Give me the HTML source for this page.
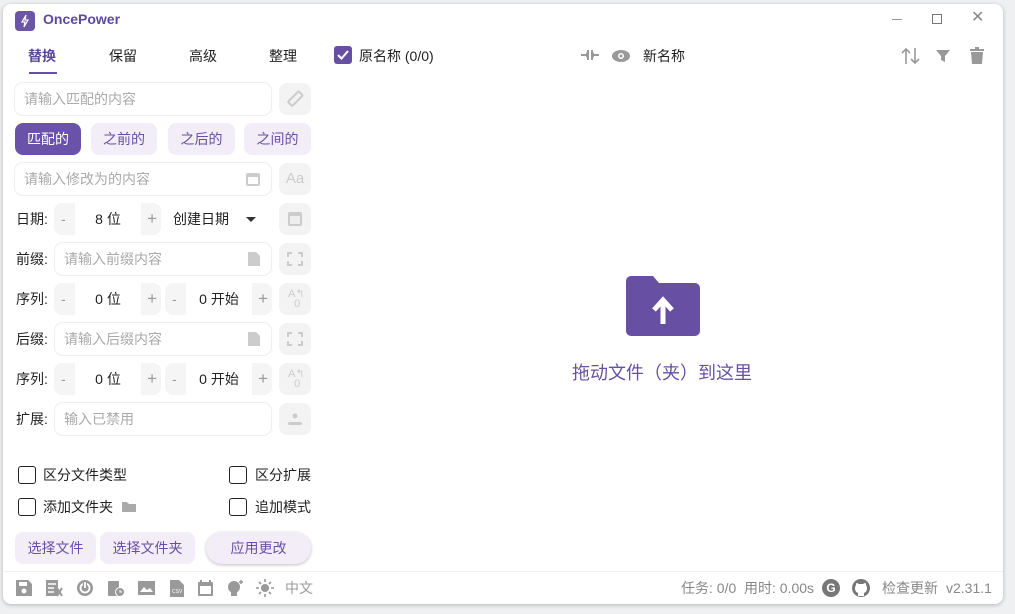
<!DOCTYPE html>
<html><head><meta charset="utf-8"><style>
*{box-sizing:border-box;margin:0;padding:0}
body{width:1015px;height:614px;background:#eef0f2;font-family:"Liberation Sans","Noto Sans CJK SC",sans-serif;font-size:14px;color:#222;position:relative;overflow:hidden}
.win{position:absolute;left:3px;top:4px;width:1000px;height:600px;background:#fff;border-radius:8px;box-shadow:0 1px 4px rgba(0,0,0,.25)}
.a{position:absolute}
.inp{position:absolute;height:32px;border-radius:8px;background:#fff;box-shadow:0 0 0 1px #eeeeee;color:#aaa;font-size:14px;line-height:32px;padding-left:9px}
.ib{position:absolute;width:32px;height:32px;border-radius:8px;background:#f3f3f3}
.pb{position:absolute;height:32px;border-radius:8px;background:#f3edf7;color:#6750a4;text-align:center;line-height:32px;font-size:14px}
.lbl{position:absolute;left:13px;font-size:14px;line-height:32px}
.st{position:absolute;height:32px;border-radius:8px;background:#f5f5f5;font-size:14px;line-height:32px}
.st .c{position:absolute;left:21px;width:66px;top:0;height:32px;background:#fff;text-align:center;color:#222}
.st .m{position:absolute;left:7px;color:#999}
.st .p{position:absolute;right:4px;color:#999;font-size:17px}
.cb{position:absolute;width:18px;height:18px;border:1.5px solid #222;border-radius:3px}
.t{position:absolute;font-size:14px;line-height:20px}
.bi{position:absolute;top:575px}
</style></head><body>
<div class="win">
<div class="a" style="left:12px;top:7px;width:20px;height:20px;border-radius:4px;background:#6a55a8"><svg width="20" height="20"><path d="M11 4 L7 11 H10 L9 16 L13 9 H10 Z" fill="none" stroke="#fff" stroke-width="1.2"/></svg></div>
<div class="t" style="left:40px;top:5px;font-weight:bold;color:#5b4a9e;font-size:14px">OncePower</div>
<div class="a" style="left:889px;top:15px;width:10px;border-top:1px solid #999"></div>
<div class="a" style="left:929px;top:10px;width:10px;height:10px;border:1px solid #777"></div>
<div class="t" style="left:968px;top:4px;color:#888;font-size:16px">✕</div>
<div class="t" style="left:25px;top:42px;color:#5b4a9e;font-weight:bold">替换</div>
<div class="t" style="left:106px;top:42px">保留</div>
<div class="t" style="left:186px;top:42px">高级</div>
<div class="t" style="left:266px;top:42px">整理</div>
<div class="a" style="left:26px;top:68px;width:28px;height:2px;background:#6750a4"></div>

<div class="inp" style="left:12px;top:79px;width:256px">请输入匹配的内容</div>
<div class="ib" style="left:276px;top:79px"><svg width="32" height="32"><rect x="9" y="13" width="15" height="6" rx="1" transform="rotate(-45 16 16)" fill="none" stroke="#ccc" stroke-width="2"/></svg></div>
<div class="pb" style="left:12px;top:119px;width:66px;background:#6a52a8;color:#fff">匹配的</div>
<div class="pb" style="left:88px;top:119px;width:66px">之前的</div>
<div class="pb" style="left:165px;top:119px;width:67px">之后的</div>
<div class="pb" style="left:241px;top:119px;width:67px">之间的</div>
<div class="inp" style="left:12px;top:159px;width:256px">请输入修改为的内容<svg class="a" style="left:230px;top:8px" width="16" height="16"><rect x="1" y="2" width="14" height="13" rx="2" fill="#ccc"/><rect x="3" y="6" width="10" height="7" fill="#fff"/></svg></div>
<div class="ib" style="left:276px;top:159px;color:#ccc;text-align:center;line-height:32px;font-size:15px">Aa</div>

<div class="lbl" style="top:199px">日期:</div>
<div class="st" style="left:51px;top:199px;width:107px"><span class="m">-</span><div class="c">8 位</div><span class="p">+</span></div>
<div class="t" style="left:170px;top:205px">创建日期</div>
<div class="a" style="left:243px;top:213px;border-left:5px solid transparent;border-right:5px solid transparent;border-top:5px solid #333"></div>
<div class="ib" style="left:276px;top:199px"><svg width="32" height="32"><rect x="9" y="9" width="14" height="14" rx="2" fill="#ccc"/><rect x="11" y="13" width="10" height="8" fill="#eee"/></svg></div>

<div class="lbl" style="top:239px">前缀:</div>
<div class="inp" style="left:52px;top:239px;width:216px">请输入前缀内容<svg class="a" style="left:192px;top:8px" width="14" height="16"><path d="M1 1h8l4 4v10H1z" fill="#ccc"/></svg></div>
<div class="ib" style="left:276px;top:239px"><svg width="32" height="32"><path d="M9 14V10h4M19 10h4v4M23 18v4h-4M13 22H9v-4" fill="none" stroke="#ccc" stroke-width="2"/></svg></div>

<div class="lbl" style="top:279px">序列:</div>
<div class="st" style="left:51px;top:279px;width:107px"><span class="m">-</span><div class="c">0 位</div><span class="p">+</span></div>
<div class="st" style="left:162px;top:279px;width:107px"><span class="m">-</span><div class="c">0 开始</div><span class="p">+</span></div>
<div class="ib" style="left:276px;top:279px;color:#ccc;font-size:11px;padding:6px 0 0 9px;line-height:10px">A↰<br>&nbsp;&nbsp;0</div>

<div class="lbl" style="top:319px">后缀:</div>
<div class="inp" style="left:52px;top:319px;width:216px">请输入后缀内容<svg class="a" style="left:192px;top:8px" width="14" height="16"><path d="M1 1h8l4 4v10H1z" fill="#ccc"/></svg></div>
<div class="ib" style="left:276px;top:319px"><svg width="32" height="32"><path d="M9 14V10h4M19 10h4v4M23 18v4h-4M13 22H9v-4" fill="none" stroke="#ccc" stroke-width="2"/></svg></div>

<div class="lbl" style="top:359px">序列:</div>
<div class="st" style="left:51px;top:359px;width:107px"><span class="m">-</span><div class="c">0 位</div><span class="p">+</span></div>
<div class="st" style="left:162px;top:359px;width:107px"><span class="m">-</span><div class="c">0 开始</div><span class="p">+</span></div>
<div class="ib" style="left:276px;top:359px;color:#ccc;font-size:11px;padding:6px 0 0 9px;line-height:10px">A↰<br>&nbsp;&nbsp;0</div>

<div class="lbl" style="top:399px">扩展:</div>
<div class="inp" style="left:52px;top:399px;width:216px">输入已禁用</div>
<div class="ib" style="left:276px;top:399px"><svg width="32" height="32"><circle cx="16" cy="13" r="2.5" fill="#ccc"/><rect x="9" y="19" width="14" height="3" rx="1.5" fill="#ccc"/></svg></div>

<div class="cb" style="left:15px;top:462px"></div><div class="t" style="left:40px;top:461px">区分文件类型</div>
<div class="cb" style="left:226px;top:462px"></div><div class="t" style="left:252px;top:461px">区分扩展</div>
<div class="cb" style="left:15px;top:494px"></div><div class="t" style="left:40px;top:493px">添加文件夹</div>
<svg class="a" style="left:118px;top:496px" width="16" height="13"><path d="M1 2h5l2 2h7v8H1z" fill="#aaa"/></svg>
<div class="cb" style="left:226px;top:494px"></div><div class="t" style="left:252px;top:493px">追加模式</div>

<div class="pb" style="left:12px;top:528px;width:81px">选择文件</div>
<div class="pb" style="left:97px;top:528px;width:95px">选择文件夹</div>
<div class="pb" style="left:203px;top:528px;width:105px;border-radius:16px;box-shadow:0 1px 3px rgba(0,0,0,.25)">应用更改</div>

<div class="a" style="left:0;top:567px;width:1000px;border-top:1px solid #f0f0f0"></div>
<svg class="bi" style="left:12px" width="18" height="18"><path d="M1 1h12l4 4v12H1z" fill="#999"/><rect x="4" y="3" width="8" height="4" fill="#fff"/><circle cx="9" cy="12" r="2.5" fill="#fff"/></svg>
<svg class="bi" style="left:42px" width="18" height="18"><rect x="1" y="1" width="12" height="16" fill="#999"/><path d="M3 5h8M3 9h6M3 13h6" stroke="#fff" stroke-width="1.5"/><path d="M12 9l5 8M17 9l-5 8" stroke="#999" stroke-width="2"/></svg>
<svg class="bi" style="left:73px" width="18" height="18"><circle cx="9" cy="9" r="8" fill="#999"/><circle cx="9" cy="9" r="4.5" fill="none" stroke="#fff" stroke-width="1.8"/><path d="M9 3v6" stroke="#999" stroke-width="4"/><path d="M9 3v6" stroke="#fff" stroke-width="1.8"/></svg>
<svg class="bi" style="left:104px" width="18" height="18"><rect x="1" y="2" width="11" height="15" rx="1" fill="#999"/><circle cx="13" cy="13" r="4.5" fill="#999" stroke="#fff"/><path d="M13 11v2h2" stroke="#fff" fill="none"/></svg>
<svg class="bi" style="left:134px" width="19" height="18"><rect x="1" y="2" width="17" height="14" fill="#999"/><path d="M3 13l4-5 3 3 3-2 3 4z" fill="#fff"/></svg>
<svg class="bi" style="left:166px" width="16" height="18"><path d="M1 1h9l5 5v12H1z" fill="#999"/><text x="3" y="14" font-size="5" fill="#fff" font-family="Liberation Sans">CSV</text></svg>
<svg class="bi" style="left:194px" width="17" height="18"><rect x="1" y="3" width="15" height="14" rx="1" fill="#999"/><rect x="3" y="7" width="11" height="8" fill="#fff"/><path d="M4 1v3M13 1v3" stroke="#999" stroke-width="2"/></svg>
<svg class="bi" style="left:223px" width="19" height="18"><circle cx="8" cy="8" r="6" fill="#999"/><rect x="5" y="13" width="6" height="4" fill="#999"/><path d="M15 1v4M13 3h4" stroke="#999" stroke-width="1.5"/></svg>
<svg class="bi" style="left:253px" width="18" height="18"><circle cx="9" cy="9" r="4" fill="#999"/><path d="M9 0v3M9 15v3M0 9h3M15 9h3M3 3l2 2M13 13l2 2M3 15l2-2M13 5l2-2" stroke="#999" stroke-width="1.6"/></svg>
<div class="t" style="left:282px;top:574px;color:#999">中文</div>

<div class="t" style="left:678px;top:574px;color:#888">任务: 0/0 &nbsp;用时: 0.00s</div>
<div class="a" style="left:819px;top:575px;width:18px;height:18px;border-radius:50%;background:#777;color:#fff;font-size:12px;font-weight:bold;text-align:center;line-height:18px">G</div>
<svg class="a" style="left:849px;top:575px" width="18" height="18"><circle cx="9" cy="9" r="9" fill="#777"/><path d="M6 17v-3c-2-1-3-2-3-5 0-1 1-3 1-3 0-1 0-2 1-2l2 1h4l2-1c1 0 1 1 1 2 0 0 1 2 1 3 0 3-1 4-3 5v3z" fill="#fff"/></svg>
<div class="t" style="left:879px;top:574px;color:#888">检查更新</div>
<div class="t" style="left:943px;top:574px;color:#888">v2.31.1</div>

<div class="a" style="left:331px;top:42px;width:18px;height:18px;border-radius:3px;background:#6750a4"><svg width="18" height="18"><path d="M4 9l3.5 3.5L14 5" fill="none" stroke="#fff" stroke-width="2"/></svg></div>
<div class="t" style="left:356px;top:42px">原名称 (0/0)</div>
<svg class="a" style="left:577px;top:44px" width="20" height="14"><path d="M1 7h5M14 7h5M8 2v10M12 2v10" stroke="#999" stroke-width="2"/><path d="M6 4l2 3-2 3zM14 4l-2 3 2 3z" fill="#999"/></svg>
<svg class="a" style="left:608px;top:45px" width="20" height="14"><ellipse cx="10" cy="7" rx="9" ry="6" fill="#999"/><circle cx="10" cy="7" r="3" fill="#fff"/><circle cx="10" cy="7" r="1.5" fill="#999"/></svg>
<div class="t" style="left:640px;top:42px">新名称</div>
<svg class="a" style="left:898px;top:43px" width="20" height="18"><path d="M5 17V2M1 6l4-4 4 4M14 1v15M10 12l4 4 4-4" fill="none" stroke="#999" stroke-width="1.6"/></svg>
<svg class="a" style="left:932px;top:45px" width="16" height="14"><path d="M1 1h14l-5 6v6l-4-2V7z" fill="#999"/></svg>
<svg class="a" style="left:967px;top:43px" width="14" height="17"><rect x="0" y="2" width="14" height="2" fill="#999"/><rect x="5" y="0" width="4" height="2" fill="#999"/><path d="M1 5h12l-1 12H2z" fill="#999"/></svg>

<svg class="a" style="left:623px;top:272px" width="74" height="60"><path d="M0 5a5 5 0 0 1 5-5h22l6 7h36a5 5 0 0 1 5 5v43a5 5 0 0 1-5 5H5a5 5 0 0 1-5-5z" fill="#6750a4"/><path d="M37 48V25M28 34l9-10 9 10" fill="none" stroke="#fff" stroke-width="5"/></svg>
<div class="t" style="left:569px;top:357px;font-size:18px;color:#6750a4;line-height:24px">拖动文件（夹）到这里</div>
</div>
</body></html>
